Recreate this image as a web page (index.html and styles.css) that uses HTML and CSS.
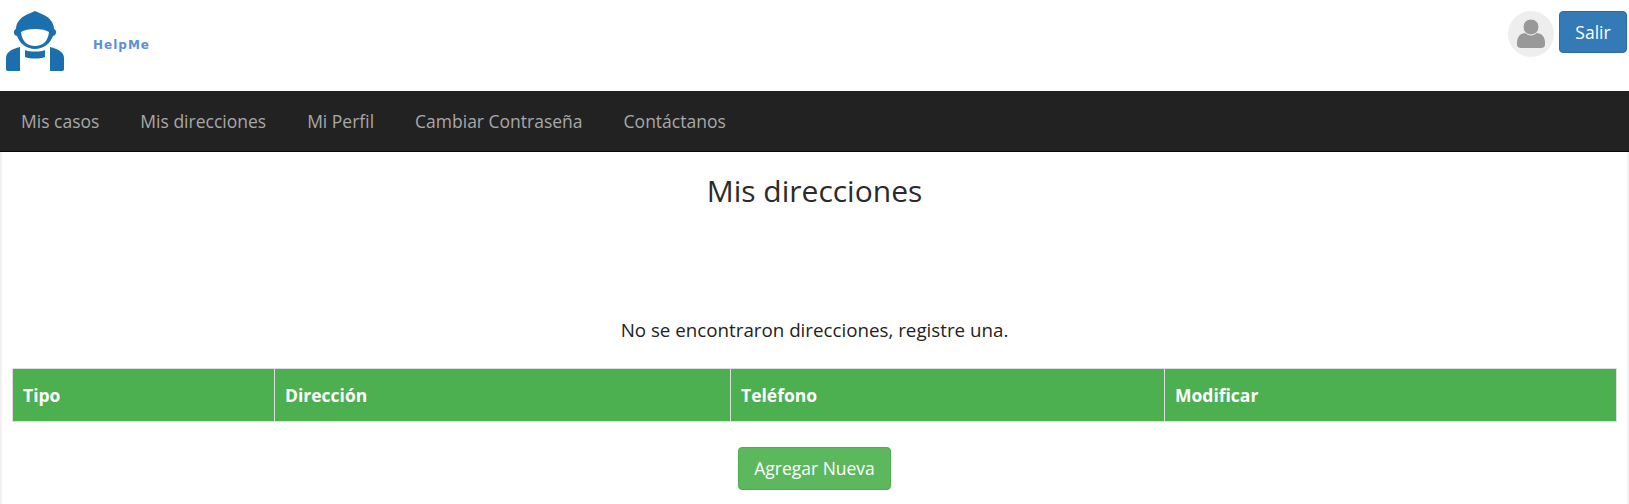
FILE: index.html
```html
<!DOCTYPE html>
<html lang="es">
<head>
    <meta charset="UTF-8">
    <meta name="viewport" content="width=device-width, initial-scale=1.0">
    <title>HelpMe - Mis direcciones</title>
    <link rel="stylesheet" href="styles.css">
</head>
<body>
    <header class="top-bar">
        <div class="brand">
            <svg class="brand-icon" viewBox="0 0 66 72" aria-hidden="true">
                <!-- hard hat and face -->
                <path class="logo" fill-rule="evenodd" d="M35 11 L44 15 C50 18 54 23 54 29 C57 30 57 35 53 36 C50 44 43 49 35 49 C27 49 20 44 17 36 C13 35 13 30 16 29 C16 23 20 18 26 15 Z M35 29 C29 29 24 30 21 32 C22 41 27 46 35 46 C43 46 48 41 49 32 C46 30 41 29 35 29 Z"/>
                <!-- collar -->
                <path class="logo" d="M25 50 C30 52 40 52 45 50 L45 57 C40 59 30 59 25 57 Z"/>
                <!-- shoulders -->
                <path class="logo" d="M20 47 L20 71 L8 71 C6.5 71 6 70 6 69 L6 58 C6 52 12 49 20 47 Z"/>
                <path class="logo" d="M50 47 L50 71 L62 71 C63.5 71 64 70 64 69 L64 58 C64 52 58 49 50 47 Z"/>
            </svg>
            <span class="brand-name">HelpMe</span>
        </div>
        <div class="user-box">
            <span class="avatar">
                <svg viewBox="0 0 46 46" aria-hidden="true">
                    <path d="M9 32 C9 26 12 22 18 22 C21 25 25 25 28 22 C34 22 37 26 37 32 L37 34 C37 36 35 37 33 37 L13 37 C11 37 9 36 9 34 Z"/>
                    <circle cx="23" cy="16" r="8"/>
                </svg>
            </span>
            <a class="btn btn-blue" href="#">Salir</a>
        </div>
    </header>

    <nav class="main-nav">
        <a href="#">Mis casos</a>
        <a href="#">Mis direcciones</a>
        <a href="#">Mi Perfil</a>
        <a href="#">Cambiar Contraseña</a>
        <a href="#">Contáctanos</a>
    </nav>

    <main class="content">
        <h1>Mis direcciones</h1>
        <p class="empty-msg">No se encontraron direcciones, registre una.</p>
        <table class="address-table">
            <thead>
                <tr>
                    <th class="col-type">Tipo</th>
                    <th class="col-address">Dirección</th>
                    <th class="col-phone">Teléfono</th>
                    <th>Modificar</th>
                </tr>
            </thead>
        </table>
        <div class="actions">
            <a class="btn btn-green" href="#">Agregar Nueva</a>
        </div>
    </main>
</body>
</html>
```

FILE: styles.css
```css
html, body {
    height: 100%;
}
body {
    display: flex;
    flex-direction: column;
    font-family: "Open Sans", Arial, sans-serif;
    font-size: 17.5px;
    background-color: #f2f2f2;
    color: #222;
    margin: 0;
    overflow: hidden;
}
a {
    text-decoration: none;
}
.top-bar {
    display: flex;
    flex: none;
    justify-content: space-between;
    height: 91px;
    background-color: #fff;
}
.brand {
    display: flex;
    align-items: flex-start;
}
.brand-icon {
    width: 66px;
    height: 72px;
}
.logo {
    fill: #1c6fae;
}
.brand-name {
    font-family: "DejaVu Sans", Arial, sans-serif;
    font-size: 12px;
    font-weight: bold;
    letter-spacing: 1px;
    color: #5b8fd9;
    margin: 38px 0 0 27px;
}
.user-box {
    display: flex;
    align-items: flex-start;
    gap: 5px;
    padding: 11px 2px 0 0;
}
.avatar {
    width: 46px;
    height: 46px;
    border-radius: 50%;
    background-color: #eee;
}
.avatar svg {
    display: block;
    fill: #999;
}
.avatar circle {
    stroke: #eee;
    stroke-width: 1;
}
.btn {
    display: inline-block;
    color: #fff;
    border-radius: 4px;
    border: 1px solid transparent;
    box-sizing: border-box;
    text-align: center;
}
.btn-blue {
    width: 68px;
    height: 42px;
    line-height: 40px;
    background-color: #337ab7;
    border-color: #2e6da4;
}
.btn-green {
    width: 153px;
    height: 43px;
    line-height: 41px;
    background-color: #5cb85c;
    border-color: #4cae4c;
}
.main-nav {
    display: flex;
    flex: none;
    gap: 41px;
    height: 61px;
    box-sizing: border-box;
    padding-left: 21px;
    line-height: 60px;
    background-color: #222;
    border-bottom: 1px solid #080808;
}
.main-nav a {
    color: #a8a8a8;
}
.content {
    flex: 1;
    background-color: #fff;
    margin: 0 2px;
    padding: 17px 10px 0;
}
h1 {
    font-size: 30px;
    font-weight: 500;
    line-height: 44px;
    text-align: center;
    color: #2b2b2b;
    margin: 0;
}
.empty-msg {
    font-weight: 500;
    font-size: 18.75px;
    line-height: 24px;
    text-align: center;
    margin: 105px 0 0;
}
.address-table {
    width: 100%;
    margin-top: 26px;
    border-collapse: collapse;
    table-layout: fixed;
}
.address-table th {
    height: 53px;
    box-sizing: border-box;
    padding: 0 10px;
    font-weight: bold;
    text-align: left;
    color: #fff;
    background-color: #4caf50;
    border: 1px solid #ddd;
}
.col-type {
    width: 262px;
}
.col-address {
    width: 456px;
}
.col-phone {
    width: 434px;
}
.actions {
    text-align: center;
    margin-top: 25px;
}
```
